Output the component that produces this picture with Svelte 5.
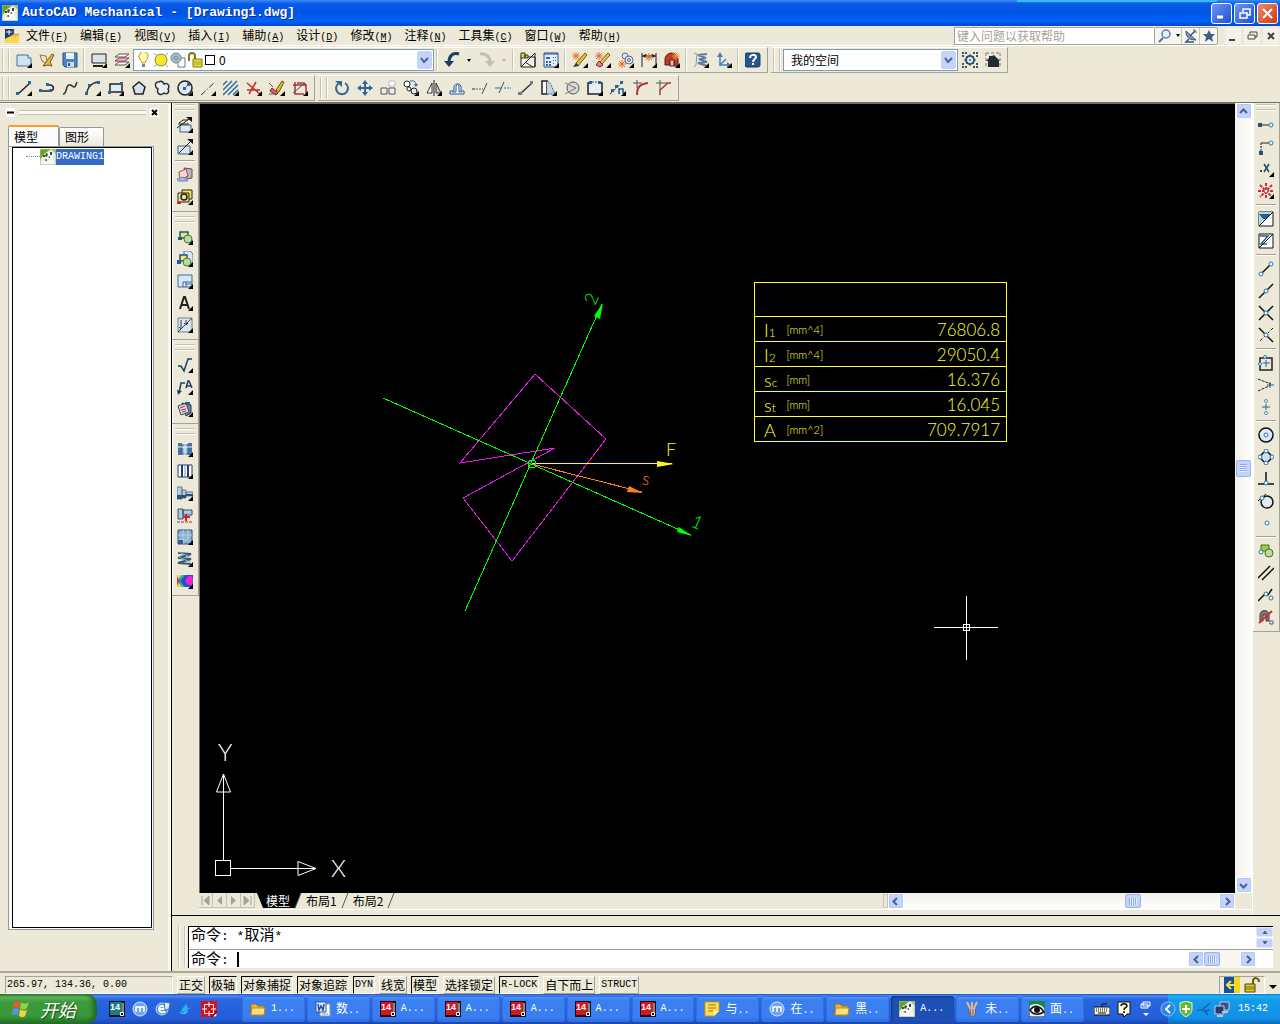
<script lang="ts">
    let layer = "0";
    let workspace = "我的空间";
    let question = "";
    let command = "";
    let activeTab = "模型";

    const menus = [
        ["文件", "F"], ["编辑", "E"], ["视图", "V"], ["插入", "I"], ["辅助", "A"], ["设计", "D"],
        ["修改", "M"], ["注释", "N"], ["工具集", "C"], ["窗口", "W"], ["帮助", "H"]
    ];

    // 16x16 artwork, shared by all the toolbars
    const icons: Record<string, string> = {
        page: '<path d="M1 3h11l3 3v8H1z" fill="#cfe3f4" stroke="#4c6f93"/><path d="M12 3v3h3" fill="#fff" stroke="#4c6f93"/>',
        open: '<path d="M1 3l6 1 2 8-6-3z" fill="#f0e5bd" stroke="#8b7a4a"/><path d="M4 14l9-12 2 1-4 7 2 4-4-1z" fill="#e6b93d" stroke="#77570f"/>',
        save: '<path d="M1 1h14v14H3l-2-2z" fill="#4d82c4" stroke="#2b5487"/><path d="M4 1h8v6H4z" fill="#eaf2fa"/><path d="M5 10h7v5H5z" fill="#cddcec"/><path d="M6 11h2v3H6z" fill="#2b5487"/>',
        screen: '<path d="M1 2h14v9H1z" fill="#dbe3e6" stroke="#222"/><path d="M2 14h10" stroke="#222" stroke-width="2"/>',
        layers: '<path d="M5 2h10l-4 3H1z" fill="#fff" stroke="#555"/><path d="M5 6h10l-4 3H1z" fill="#f3c0c7" stroke="#a03048"/><path d="M5 10h10l-4 3H1z" fill="#fff" stroke="#555"/>',
        undo: '<path d="M15 2C9 0 5 4 5 10" fill="none" stroke="#1d3f66" stroke-width="3"/><path d="M0 9h10l-5 6z" fill="#1d3f66"/>',
        redo: '<path d="M1 2c6-1 10 3 10 8" fill="none" stroke="#c3c0b3" stroke-width="3"/><path d="M6 9h10l-5 6z" fill="#c3c0b3"/>',
        title: '<path d="M1 5h14v10H1zM1 15L15 1v14M5 10l8 5" fill="#f4f4f0" stroke="#222"/><path d="M1 1h4v5H1zM5 3h3v3H5z" fill="#e8d22c" stroke="#333"/>',
        calc: '<path d="M1 1h14v14H1z" fill="#e5eefa" stroke="#234f86"/><path d="M1 2h14" stroke="#234f86" stroke-width="1"/><path d="M3 5h4v2H3zM3 9h2v2H3zM6 9h2v2H6zM3 12h2v2H3zM6 12h2v2H6zM10 5h1v1h-1zM12 5h1v1h-1zM10 8h1v1h-1zM12 8h1v1h-1zM10 11h1v1h-1z" fill="#2e69ad"/>',
        power: '<path d="M6 14L15 3l-2-2L4 11z" fill="#e7bd37" stroke="#74570f"/><path d="M4 11l3 3-6 1z" fill="#333"/><path d="M0 4h8M4 0v8M1 1l6 6M7 1L1 7" stroke="#e46a18"/>',
        erasePower: '<path d="M7 12L15 3l-2-2L5 10z" fill="#efc44a" stroke="#74570f"/><path d="M4 9l4 4-3 2-4-2z" fill="#df8585" stroke="#882222"/><path d="M0 4h8M4 0v8M1 1l6 6M7 1L1 7" stroke="#e46a18"/>',
        copyPower: '<circle cx="7" cy="4" r="3" fill="#dbe8f3" stroke="#5a6d80"/><circle cx="11" cy="8" r="4" fill="#dbe8f3" stroke="#5a6d80"/><circle cx="11" cy="8" r="1.5" stroke="#5a6d80"/><path d="M0 12h8M4 8v8M1 9l6 6M7 9l-6 6" stroke="#e46a18"/>',
        dim: '<path d="M1 1v14M15 1v11M1 4h14" stroke="#222"/><path d="M1 4l4-2v4zM15 4l-4-2v4z" fill="#222"/><path d="M4 5h8M8 1v8M5 2l6 6M11 2L5 8" stroke="#e46a18"/>',
        magnet: '<path d="M1 13V8a6 6 0 0 1 13-1v7h-4V8H6v5z" fill="#c13b25" stroke="#5c1a12"/><path d="M6 9v5h4V9" fill="#d3c6bd" stroke="#5c1a12"/><path d="M8 4h8M12 0v8M9 1l6 6M15 1L9 7" stroke="#ef9b33"/>',
        spring: '<path d="M14 2L5 3l8 3-7 1 8 3-9 1 9 3" fill="none" stroke="#5d7f9f" stroke-width="2"/><path d="M1 1l3 1-1 11-2 2" fill="none" stroke="#8298aa"/>',
        axes: '<path d="M4 14V2M4 13h9M4 13l6-6" fill="none" stroke="#4a7fae" stroke-width="1.5"/><path d="M1 5l3-5 3 5M11 10l4 3-4 3" fill="#4a7fae"/>',
        help: '<rect x="0" y="1" width="15" height="14" rx="2" fill="#23578e" stroke="#173b63"/><path d="M5 6c0-4 6-4 6-1 0 2-3 2-3 5" fill="none" stroke="#fff" stroke-width="2"/><path d="M7 11h2v2H7z" fill="#fff"/>',
        gear: '<path d="M1 5V1h4M11 1h4v4M15 11v4h-4M5 15H1v-4" fill="none" stroke="#3a566c" stroke-width="2" stroke-dasharray="2 1"/><circle cx="8" cy="8" r="4" fill="#e9eef0" stroke="#34536a" stroke-width="2"/><path d="M8 2v3M8 11v3M2 8h3M11 8h3M4 4l2 2M12 4l-2 2M4 12l2-2M12 12l-2-2" stroke="#34536a"/><circle cx="8" cy="8" r="1" fill="#34536a"/>',
        home: '<path d="M1 1h14M1 1v14M15 1v14" stroke="#777" stroke-dasharray="3 2"/><path d="M1 9l3-3V4h3l2-1 6 6h-1v6H3V9z" fill="#222a33"/>',
        line: '<path d="M2 14L14 3" stroke="#222" stroke-width="1.5"/><path d="M0 12h3v3H0zM12 1h3v3h-3z" fill="#2b659f"/>',
        pline: '<path d="M2 11h9c5 0 4-6 0-6H8" fill="none" stroke="#222" stroke-width="1.5"/><path d="M0 9h3v3H0zM7 3h3v3H7zM10 9h3v3h-3z" fill="#2b659f"/>',
        spline: '<path d="M1 14c3 0 3-4 4-7 2-5 6 0 7 0 2 0 2-3 3-5" fill="none" stroke="#333" stroke-width="1.5"/>',
        arc: '<path d="M2 14C2 8 6 3 13 2" fill="none" stroke="#333" stroke-width="1.5"/><path d="M0 12h3v3H0zM3 4h3v3H3zM12 1h3v3h-3z" fill="#2b659f"/>',
        rect: '<path d="M2 4h12v8H2z" fill="#e1ebf4" stroke="#222" stroke-width="1.5"/><path d="M0 11h3v3H0zM12 2h3v3h-3z" fill="#2b659f"/>',
        poly: '<path d="M8 2l6 5-2 7H4L2 7z" fill="#d3e1ec" stroke="#222" stroke-width="1.5"/>',
        cloud: '<path d="M4 9C0 7 1 1 5 2c2-2 4 0 5 2 4-2 6 2 4 5 2 3-1 6-4 4-3 3-8 1-6-4z" fill="#e9eef3" stroke="#333" stroke-width="1.5"/>',
        circle: '<circle cx="8" cy="8" r="7" fill="#d9e8f4" stroke="#222" stroke-width="1.5"/><path d="M8 8l4-4" stroke="#2b659f"/><path d="M6 7h3v3H6zM10 3h3v3h-3z" fill="#2b659f"/>',
        center: '<path d="M1 15L15 2" stroke="#333" stroke-dasharray="6 2 1 2"/>',
        hatch: '<path d="M0 5l4-4M0 10l9-9M0 15L14 1M5 15L15 5M10 15l5-5" stroke="#2f6ca7" stroke-width="1.5"/>',
        break: '<path d="M1 3l13 11M3 14L10 2M1 10h13" stroke="#c92c2c" stroke-width="1.5"/>',
        erase: '<path d="M7 10l6-9 2 1-5 10z" fill="#e5bb32" stroke="#6b500f"/><path d="M3 8l6 5-2 2-6-4z" fill="#e46565" stroke="#811d1d"/><path d="M0 14h7M0 3l4 4" stroke="#555"/>',
        contour: '<path d="M3 2v12h9M1 5h13v8M5 3h6c2 0 3 2 3 5" fill="none" stroke="#a83440" stroke-width="1.5"/><path d="M1 13L13 3" stroke="#555"/>',
        rotate: '<path d="M5 3a6 6 0 1 0 6 0" fill="none" stroke="#3b6791" stroke-width="2"/><path d="M1 1h7v6z" fill="#3b6791"/>',
        move: '<path d="M8 0l3 4H9v3h3V5l4 3-4 3V9H9v3h2l-3 4-3-4h2V9H4v2L0 8l4-3v2h3V4H5z" fill="#2f659c"/>',
        array: '<path d="M1 8h6v6H1zM9 8h6v6H9z" fill="#e8edf1" stroke="#555"/><path d="M9 1h6v5H9z" fill="#fff" stroke="#bbb"/>',
        copy: '<circle cx="4" cy="4" r="3" fill="#fff" stroke="#222"/><circle cx="11" cy="11" r="3" fill="#dce8f2" stroke="#222"/><circle cx="6" cy="9" r="2" fill="#fff" stroke="#222"/><path d="M7 1c5-1 6 2 6 4" fill="none" stroke="#2b659f"/><path d="M11 4h4l-2 3z" fill="#2b659f"/>',
        mirror: '<path d="M6 3v10H1z" fill="#fff" stroke="#333"/><path d="M10 3v10h5z" fill="#b9cfe2" stroke="#333"/><path d="M8 0v16" stroke="#222"/>',
        offset: '<path d="M1 14v-3h4V6a4 4 0 0 1 7 0v5h3v3z" fill="#fff" stroke="#1f568e"/><path d="M3 12h4V6c1-2 3-2 3 0v6h3" fill="none" stroke="#1f568e"/>',
        extend: '<path d="M0 9h3" stroke="#222"/><path d="M4 9h7" stroke="#2f6ca7" stroke-dasharray="2 1"/><path d="M10 14l5-11" stroke="#456"/>',
        trim: '<path d="M0 8h7" stroke="#2f6ca7"/><path d="M9 8h7" stroke="#2f6ca7" stroke-dasharray="2 1"/><path d="M4 13L9 2" stroke="#456"/>',
        lengthen: '<path d="M2 14L14 3" stroke="#333" stroke-width="1.5"/><path d="M0 12h4v3H0zM12 1h3v3h-3z" fill="#68818a"/>',
        stretch: '<path d="M1 1h5v13H1z" fill="#fff" stroke="#222" stroke-width="1.5"/><path d="M6 1c4 1 5 7 8 13H6" fill="#c3d4e3" stroke="#2f5e8e" stroke-dasharray="2 1"/>',
        join: '<circle cx="9" cy="8" r="6" fill="#d9d9d9" stroke="#555"/><path d="M1 3l11 5-11 6" fill="none" stroke="#777"/>',
        chamfer: '<path d="M3 3h-2v11h14V3h-2" fill="#e8eef4" stroke="#222" stroke-width="1.5"/><path d="M2 1h3v3H2zM11 1h3v3h-3z" fill="#2b659f"/><path d="M5 2h6" stroke="#2b659f" stroke-dasharray="2 1"/>',
        divide: '<path d="M0 14L14 1" stroke="#333" stroke-dasharray="3 2"/><path d="M1 9h3v3H1zM5 5h3v3H5zM10 1h3v3h-3z" fill="#2b659f"/><path d="M9 14V9h4v4h2" fill="none" stroke="#1f568e" stroke-width="1.5"/>',
        fillet: '<path d="M4 15c0-7 2-11 11-12" fill="none" stroke="#b5323c" stroke-width="2"/><path d="M0 3h9M4 0v8" stroke="#555"/>',
        bevel: '<path d="M4 15V10l8-7h3" fill="none" stroke="#b5323c" stroke-width="1.5"/><path d="M0 3h12M4 0v10" stroke="#555"/>',
        viewport: '<path d="M3 8h11v7H3z" fill="#dce8f3" stroke="#3c5f7f"/><path d="M0 11L12 2M1 7h11M2 6l4-3h5" stroke="#222"/><path d="M9 0h6v5z" fill="#111"/>',
        scaleView: '<path d="M1 7h12v8H1z" fill="#dce8f3" stroke="#3c5f7f"/><path d="M2 14L14 2" stroke="#222"/><path d="M10 0h6v5z" fill="#111"/>',
        hide: '<path d="M7 1l8 1v9l-5 1z" fill="#b7b7b7" stroke="#555"/><path d="M2 5l7-3 2 7-8 4z" fill="#f4d6d3" stroke="#ad4a52"/><path d="M0 12l6-2 5 4H1z" fill="#a6b8e0" stroke="#7486b5"/>',
        search: '<path d="M5 1h10v9H5z" fill="#f5e758" stroke="#222"/><path d="M1 4h11v9H1z" fill="#eee48b" stroke="#222"/><circle cx="7" cy="8" r="3" fill="none" stroke="#222" stroke-width="1.5"/><path d="M0 14h4" stroke="#c22" stroke-width="2"/>',
        block: '<path d="M3 3h8v6H3z" fill="#f2e85d" stroke="#20508a" stroke-width="1.5"/><circle cx="11" cy="10" r="4" fill="#b8da9e" stroke="#4a7a3a"/><path d="M1 8h4v3H1z" fill="#1f55a5"/>',
        blockPage: '<path d="M7 0h6l3 3v9H7z" fill="#d8e8f5" stroke="#4f79a3"/><path d="M3 4h7v6H3z" fill="#f2e85d" stroke="#20508a" stroke-width="1.5"/><circle cx="10" cy="11" r="4" fill="#b8da9e" stroke="#4a7a3a"/><path d="M0 9h4v4H0z" fill="#1f55a5"/>',
        frame: '<path d="M1 2h14v12H1z" fill="#d7e6f4" stroke="#3d6a99"/><path d="M6 14V9h9M9 9v5M9 11h6" fill="none" stroke="#3d6a99"/>',
        letter: '<path d="M3 14L7 2h1l4 12M4 10h7" fill="none" stroke="#222" stroke-width="2"/>',
        tableEdit: '<path d="M1 1h14v14H1z" fill="#dfe6ea" stroke="#6d8090"/><path d="M4 3v9M2 10l2 2 2-2M9 3v5M7 6l2 2 2-2M1 15L15 1" fill="none" stroke="#28405a"/>',
        surface: '<path d="M1 9h3l3 5 4-12h4" fill="none" stroke="#1d4066" stroke-width="1.5"/>',
        leader: '<path d="M2 14L4 4h4" fill="none" stroke="#1d4066" stroke-width="1.5"/><path d="M0 11l5 1-4 4z" fill="#1d4066"/><path d="M9 9l2-7h1l3 7M9 7h5" fill="none" stroke="#1d4066" stroke-width="1.5"/>',
        bom: '<path d="M5 2l9 2v8l-5 3z" fill="#6486a8" stroke="#334"/><path d="M1 5l8-3 3 9-8 3z" fill="#d6dde5" stroke="#445"/><path d="M3 7l5-2M4 9l5-1M5 11l4-1" stroke="#b5323c"/><path d="M8 1h5v3H8z" fill="#315f8d"/>',
        screw: '<path d="M1 2h4v12H1zM11 2h4v12h-4z" fill="#4474a6"/><path d="M5 4h6v9H5z" fill="#a8c5df" stroke="#335b83"/><path d="M8 1v14M1 6h14" stroke="#e7eff7"/>',
        hole: '<path d="M1 2h14v12H1z" fill="#fff" stroke="#1f3f66"/><path d="M5 2v12M11 2v12" stroke="#1f3f66" stroke-width="2"/><path d="M8 1v14" stroke="#7593b5"/>',
        shaft: '<path d="M0 2h5v12H0zM5 5h4v8H5zM9 7h7v4H9z" fill="#b7cbdc" stroke="#567a9c"/><path d="M0 10h5v4H0zM5 10h4v3H5zM9 9h7v2H9z" fill="#2d5072"/>',
        bearing: '<path d="M1 2h5v10H1zM6 3h9v5H6z" fill="#b4c8da" stroke="#2d5072"/><path d="M6 10h7M9 7v7" stroke="#d71f28" stroke-width="2"/><path d="M0 15h15" stroke="#d71f28" stroke-dasharray="3 1"/>',
        fea: '<path d="M1 1h14v14H1z" fill="#8bb1d3" stroke="#2d5072"/><path d="M1 6h14M1 11h10M6 1v14M11 1v10" stroke="#b9d0e6"/><path d="M1 11h5v4H1z" fill="#315f8d"/>',
        coil: '<path d="M1 2l13 1L1 7l13 1L1 12l13 1" fill="none" stroke="#35597b" stroke-width="2"/><path d="M2 1l11 5M2 6l11 5" stroke="#90abc2"/>',
        stress: '<path d="M0 2h16v12H0z" fill="#29a8e0"/><path d="M0 2h5L1 6zM0 14h5L1 9z" fill="#f2dc28"/><path d="M0 4v8l3-4z" fill="#e52d2d"/><path d="M3 8l5-6h8v12H8z" fill="#2454b8"/><path d="M8 8l3-5h4l1 5-1 4h-4z" fill="#f321d4"/>',
        track: '<path d="M4 8h7" stroke="#222"/><path d="M0 6h4v4H0z" fill="#28536f"/><circle cx="13" cy="8" r="2" fill="#fff" stroke="#2874ad"/>',
        from: '<path d="M11 4H3" stroke="#222"/><path d="M3 4v9" stroke="#222" stroke-dasharray="2 1"/><path d="M1 12h4v4H1z" fill="#28536f"/><circle cx="13" cy="4" r="2" fill="#fff" stroke="#2874ad"/>',
        dotx: '<path d="M6 3l5 8M11 3l-5 8" stroke="#2b4761" stroke-width="1.5"/><path d="M2 9h2v2H2z" fill="#2b4761"/>',
        burst: '<path d="M8 0v16M0 8h16M2 2l12 12M14 2L2 14" stroke="#c4303a" stroke-width="2" stroke-dasharray="3 1"/><circle cx="8" cy="8" r="2" fill="#fff" stroke="#c4303a"/>',
        filter: '<path d="M1 1h14v14H1z" fill="#fff" stroke="#111"/><path d="M1 1h14L1 15z" fill="#b5d7eb"/><path d="M1 3h12L8 8H5z" fill="#255e90"/><path d="M1 15L15 1" stroke="#111"/>',
        zoff: '<path d="M1 1h14v14H1z" fill="#fff" stroke="#111"/><path d="M2 3h8L3 11h6" fill="none" stroke="#315a89" stroke-width="1.5"/><path d="M1 15L15 1" stroke="#111"/>',
        endpoint: '<path d="M4 12l8-8" stroke="#111" stroke-width="1.5"/><circle cx="3" cy="13" r="2" fill="#fff" stroke="#2874ad"/><circle cx="13" cy="3" r="2" fill="#fff" stroke="#2874ad"/>',
        midpoint: '<path d="M1 15L15 1" stroke="#111" stroke-width="1.5"/><circle cx="8" cy="8" r="2" fill="#fff" stroke="#2874ad"/>',
        intersect: '<path d="M1 1l14 14M15 1L1 15" stroke="#111" stroke-width="1.5"/><circle cx="8" cy="8" r="2" fill="#fff" stroke="#2874ad"/>',
        apparent: '<path d="M1 1l14 14" stroke="#111" stroke-width="1.5"/><path d="M15 1L1 15" stroke="#111" stroke-dasharray="3 2"/><circle cx="8" cy="8" r="2" fill="#fff" stroke="#2874ad"/>',
        insert: '<path d="M2 3h12v12H2z" fill="none" stroke="#222" stroke-width="1.5"/><path d="M8 5v7M5 8h7" stroke="#2b6393"/><circle cx="7" cy="2" r="1.5" fill="#fff" stroke="#2874ad"/><circle cx="2" cy="9" r="1.5" fill="#fff" stroke="#2874ad"/>',
        sym: '<path d="M0 2l13 5M0 14l13-6" stroke="#222" stroke-dasharray="3 1"/><path d="M9 8h7M12 5v6" stroke="#2b6393"/>',
        between: '<path d="M4 8h8M8 5v6" stroke="#2b6393"/><circle cx="8" cy="2" r="1.5" fill="#fff" stroke="#6a879d"/><circle cx="8" cy="14" r="1.5" fill="#fff" stroke="#6a879d"/>',
        centerSnap: '<circle cx="8" cy="8" r="7" fill="#dceafa" stroke="#111" stroke-width="1.5"/><circle cx="8" cy="8" r="2" fill="#fff" stroke="#2874ad"/>',
        quadrant: '<circle cx="8" cy="8" r="5" fill="#cfdfef" stroke="#111" stroke-width="1.5"/><g fill="#fff" stroke="#2874ad"><circle cx="8" cy="2" r="2"/><circle cx="8" cy="14" r="2"/><circle cx="2" cy="8" r="2"/><circle cx="14" cy="8" r="2"/></g>',
        perp: '<path d="M8 1v11M0 13h16" stroke="#111" stroke-width="1.5"/><circle cx="8" cy="12" r="2" fill="#fff" stroke="#2874ad"/>',
        tangent: '<circle cx="9" cy="9" r="6" fill="#dfeaf2" stroke="#111" stroke-width="1.5"/><path d="M0 8l8-7" stroke="#111"/><circle cx="4" cy="5" r="2" fill="#fff" stroke="#2874ad"/>',
        node: '<circle cx="9" cy="8" r="2" fill="#fff" stroke="#2874ad"/>',
        insSnap: '<path d="M3 2h8v6H3z" fill="#9fce3e" stroke="#44721d"/><circle cx="11" cy="10" r="4" fill="#bedb9f" stroke="#44721d"/><circle cx="3" cy="9" r="2" fill="#fff" stroke="#2874ad"/>',
        parallel: '<path d="M0 13L12 1M4 15L16 3" stroke="#111" stroke-width="1.5"/>',
        nearest: '<path d="M0 14l6-6h4l4-6" fill="none" stroke="#111" stroke-width="1.5"/><circle cx="8" cy="7" r="2" fill="#fff" stroke="#2874ad"/><circle cx="13" cy="11" r="2" fill="#fff" stroke="#567"/>',
        snapOff: '<path d="M2 12V6c0-6 9-6 9 0v6H8V6H5v6z" fill="#777" stroke="#444"/><path d="M1 14L14 2" stroke="#d52a2a" stroke-width="2"/><path d="M12 12h3v3h-3z" fill="#fff" stroke="#555"/>',
        cad: '<path d="M0 0h16v16H0z" fill="#e4ecd9"/><path d="M0 0h11L4 5 0 11z" fill="#6aa31d"/><path d="M11 0h5v5z" fill="#9bc15e"/><path d="M2 15l2-7 5-5 5 2-2 5 3 4-6 2z" fill="#f8f8f3"/><path d="M3 6h2v2H3zM6 4l2 1-1 3-2-1zM10 3h2v3h-2zM8 8l2-1v2zM4 11l3-1v2z" fill="#3b4c35"/><path d="M0 0h16v16H0z" fill="none" stroke="#a8bb9b"/>',
        dwg: '<path d="M1 1h9l5 5v9H1z" fill="#f4c430"/><path d="M1 1h9v5L1 11z" fill="#17396d"/><path d="M10 1v5h5" fill="#fff" stroke="#99a"/><path d="M2 11c4-4 7 1 13-3v7H1z" fill="#ffd54a"/><path d="M5 2v5M2 4h6" stroke="#fff"/>',
        bulb: '<path d="M6 11C5 8 3 7 3 4a4 4 0 0 1 9 0c0 3-2 4-3 7z" fill="#fff9b8" stroke="#b39b25"/><path d="M6 12h3v3H6z" fill="#788"/>',
        sun: '<circle cx="8" cy="8" r="6" fill="#f2e92e" stroke="#91842c"/><path d="M1 1l3 3M15 1l-3 3M1 15l3-3M15 15l-3-3" stroke="#999"/>',
        freeze: '<path d="M8 6h7v9H8z" fill="#fff" stroke="#777"/><circle cx="6" cy="6" r="5" fill="#a9c5cc" stroke="#66858e"/><circle cx="6" cy="6" r="2" fill="none" stroke="#66858e"/>',
        lock: '<path d="M2 9V4c0-4 6-4 6 0v3" fill="none" stroke="#807a14" stroke-width="2"/><path d="M6 7h9v8H6z" fill="#e7df37" stroke="#807a14"/><path d="M6 10h9M6 12h9" stroke="#aaa31f"/>',
        glass: '<path d="M6 10l-4 4" stroke="#58708e" stroke-width="2"/><circle cx="9" cy="6" r="4" fill="#e6effc" stroke="#617ca2" stroke-width="1.5"/>',
        dish: '<path d="M3 3c0 7 4 9 10 9z" fill="#829bbb" stroke="#34557e"/><path d="M7 8l5-5M6 11l-3 3h8" fill="none" stroke="#34557e" stroke-width="1.5"/><path d="M10 2c3 0 3 1 3 3" fill="none" stroke="#34557e"/>',
        star: '<path d="M8 2l2 4h4l-3 3 1 5-4-3-4 3 1-5-3-3h4z" fill="#3f5e85"/>',
        folder: '<path d="M1 3h5l2 2h6v9H1z" fill="#e6b72e" stroke="#99701a"/><path d="M1 14l1-7h13l-1 7z" fill="#ffe27b" stroke="#b58a23"/>',
        word: '<path d="M5 3h10v12H5z" fill="#fff" stroke="#7796c7"/><path d="M1 1h10v10H1z" fill="#dbe8fb" stroke="#2f5ba8"/><path d="M3 3l1 6 2-4 2 4 1-6" fill="none" stroke="#234c97" stroke-width="1.5"/><path d="M7 13h6" stroke="#7796c7"/>',
        note: '<path d="M1 1h14v9l-5 5H1z" fill="#ffdd55" stroke="#c69b1e"/><path d="M4 4h8M4 7h8M4 10h5" stroke="#9b7614"/><path d="M10 15v-5h5" fill="#fff0a6"/>',
        maxthon: '<circle cx="8" cy="8" r="7" fill="#70a4e6" stroke="#d6e6fa"/><path d="M4 11V6h8v5M8 6v5" fill="none" stroke="#fff" stroke-width="1.5"/>',
        mail: '<circle cx="7" cy="8" r="6" fill="#4696d7" stroke="#c4e5f8"/><path d="M4 8h6c0-4-6-4-6 0s5 4 6 2" fill="none" stroke="#fff" stroke-width="2"/><path d="M9 1l6 1-1 6-4 1z" fill="#dceefa" stroke="#3875b5"/>',
        bird: '<path d="M3 10C4 7 7 5 9 2c-1 4 0 5 4 5-4 0-4 4-6 5z" fill="#21b9ef"/><path d="M2 11c4 3 6 1 8-1" fill="none" stroke="#83e6fc"/>',
        target: '<path d="M0 0h16v16H0z" fill="#e20b17"/><path d="M3.5 3.5h9v9h-9zM8 1v5M8 10v5M1 8h5M10 8h5" fill="none" stroke="#fff"/><path d="M16 11v5h-5z" fill="#fff" stroke="#111"/>',
        paint: '<path d="M4 7l8-1-1 9H6z" fill="#b8c5d0" stroke="#566"/><path d="M6 7L3 1M8 7V1M10 7l3-6" stroke="#e3b79a" stroke-width="2"/><path d="M6 8l1 6M9 8v6" stroke="#bd3939"/>',
        eye: '<path d="M0 0h16v16H0z" fill="#eee" stroke="#111"/><path d="M0 0h16v8C11 2 5 2 0 5z" fill="#148a43"/><path d="M1 9c5-6 10-4 14 2-5 3-10 4-14-2z" fill="#fff" stroke="#111" stroke-width="1.5"/><circle cx="8" cy="9" r="3" fill="#111"/>',
        keyboard: '<path d="M0 6h16v8H0z" fill="#f5f3df" stroke="#111"/><path d="M2 8h12M2 10h12" stroke="#111" stroke-dasharray="1 1"/><path d="M4 12h8M8 6V3h5" fill="none" stroke="#111"/>',
        ask: '<path d="M2 1h12v12h-3l-3 3-1-3H2z" fill="#fffbe0" stroke="#111"/><path d="M5 5c0-3 6-3 6 0 0 2-3 1-3 4M8 10v2" fill="none" stroke="#111" stroke-width="1.5"/>',
        restore: '<path d="M5 1h7v4H5zM3 3h7v4H3z" fill="#2b67dd" stroke="#fff"/><path d="M5 12h6l-3 3z" fill="#fff"/>',
        shield: '<path d="M2 2l6-2 6 2v6c0 4-3 6-6 8-3-2-6-4-6-8z" fill="#69b936" stroke="#e4f5d4"/><path d="M8 4v8M4 8h8" stroke="#fff" stroke-width="2"/>',
        plug: '<path d="M1 9h5l8-7M7 8l5 6M9 10l5-1" fill="none" stroke="#1761a7" stroke-width="1.5"/>',
        net: '<path d="M6 1h9v8H6z" fill="#365290" stroke="#c4cbdc"/><path d="M1 5h9v8H1z" fill="#273c73" stroke="#c4cbdc"/><path d="M3 15h6M8 11h6" stroke="#bac4dc" stroke-width="2"/>',
        comm: '<path d="M0 0h10v16H0z" fill="#164fa5"/><path d="M10 0h6v16h-6z" fill="#f4d817"/><path d="M3 8h9M7 4L3 8l4 4" fill="none" stroke="#ffe22b" stroke-width="2"/>',
        unlock: '<path d="M9 8V4c0-4 6-4 6 1" fill="none" stroke="#655d05" stroke-width="2"/><path d="M1 7h10v8H1z" fill="#dccb24" stroke="#4d4705"/><path d="M1 10h10M1 12h10" stroke="#766f0d"/>'
    };

    // [icon, has flyout]; "|" is a divider
    type Tool = [string, number?];
    const fileTools: Tool[] = [["page", 1], ["open"], ["save"], ["|"], ["screen", 1], ["layers", 1]];
    const powerTools: Tool[] = [
        ["|"], ["title"], ["calc", 1], ["|"], ["power", 1], ["erasePower", 1], ["copyPower", 1], ["dim", 1],
        ["magnet", 1], ["|"], ["spring", 1], ["axes", 1], ["|"], ["help"]
    ];
    const drawTools: Tool[] = [
        ["line", 1], ["pline"], ["spline"], ["arc", 1], ["rect", 1], ["poly"], ["cloud"], ["circle", 1],
        ["center", 1], ["hatch", 1], ["break", 1], ["erase", 1], ["contour", 1]
    ];
    const modifyTools: Tool[] = [
        ["rotate"], ["move"], ["array"], ["copy", 1], ["mirror", 1], ["offset"], ["extend"], ["trim"],
        ["lengthen"], ["stretch", 1], ["join"], ["chamfer", 1], ["divide", 1], ["fillet"], ["bevel"]
    ];
    const sideTools: Tool[][] = [
        [["viewport", 1], ["scaleView", 1], ["|"], ["hide"], ["search", 1]],
        [["block", 1], ["blockPage", 1], ["frame", 1], ["letter", 1], ["tableEdit", 1]],
        [["surface", 1], ["leader", 1], ["bom", 1]],
        [["screw", 1], ["hole", 1], ["shaft", 1], ["bearing"], ["fea", 1], ["coil", 1], ["stress", 1]]
    ];
    const snapTools: Tool[] = [
        ["track"], ["from"], ["dotx", 1], ["burst", 1], ["|"], ["filter"], ["zoff"], ["|"],
        ["endpoint"], ["midpoint"], ["intersect"], ["apparent"], ["|"], ["insert"], ["sym"], ["between"], ["|"],
        ["centerSnap"], ["quadrant"], ["perp"], ["tangent"], ["node"], ["|"],
        ["insSnap"], ["parallel"], ["nearest"], ["snapOff"]
    ];

    const results = [
        ["I", "1", "[mm^4]", "76806.8"],
        ["I", "2", "[mm^4]", "29050.4"],
        ["s", "c", "[mm]", "16.376"],
        ["s", "t", "[mm]", "16.045"],
        ["A", "", "[mm^2]", "709.7917"]
    ];

    let modes = [
        { label: "正交", on: false },
        { label: "极轴", on: true },
        { label: "对象捕捉", on: true },
        { label: "对象追踪", on: true },
        { label: "DYN", on: true },
        { label: "线宽", on: false },
        { label: "模型", on: true },
        { label: "选择锁定", on: false },
        { label: "R-LOCK", on: true },
        { label: "自下而上", on: false },
        { label: "STRUCT", on: false }
    ];

    const tasks = [
        ["folder", "1", "..."], ["word", "数", ".."], ["14", "A", "..."], ["14", "A", "..."], ["14", "A", "..."],
        ["14", "A", "..."], ["14", "A", "..."], ["note", "与", ".."], ["maxthon", "在", ".."],
        ["folder", "黑", ".."], ["cad", "A", "..."], ["paint", "未", ".."], ["eye", "面", ".."]
    ];
    let activeTask = 10;

    const isLatin = (s: string) => /^[\x20-\x7e]+$/.test(s);
</script>

{#snippet icon(name: string, fly = 0)}
    <svg class="icon" width="16" height="16" viewBox="0 0 16 16" fill="none" aria-hidden="true">
        {@html icons[name]}
        {#if fly}<path d="M16 11v5h-5z" fill="#000" />{/if}
    </svg>
{/snippet}

{#snippet fourteen(bg: string)}
    <svg class="icon" width="16" height="16" viewBox="0 0 16 16" aria-hidden="true">
        <rect width="16" height="16" fill="#111" />
        <rect x="1" y="1" width="12" height="13" fill={bg} />
        <path d="M14 2v10" stroke="#fff" />
        <text x="1" y="9" font-family="Liberation Sans" font-size="9" font-weight="bold" fill="#fff">14</text>
        <path d="M11.5 11.5h3v3h-3z" fill="#111" stroke="#fff" />
    </svg>
{/snippet}

{#snippet tools(list: Tool[])}
    {#each list as [name, fly]}
        {#if name === "|"}
            <span class="divider"></span>
        {:else}
            <button class="tool" aria-label={name}>{@render icon(name, fly)}</button>
        {/if}
    {/each}
{/snippet}

{#snippet scrollButton(dir: string, d: string)}
    <button class="scroll-btn" aria-label={dir}>
        <svg width="9" height="9" viewBox="0 0 9 9"><path {d} fill="none" stroke="#4d6185" stroke-width="2" /></svg>
    </button>
{/snippet}

<div class="window">
    <header class="titlebar">
        {@render icon("cad")}
        <h1>AutoCAD Mechanical - [Drawing1.dwg]</h1>
        <span class="peek"></span>
        <div class="caption">
            <button aria-label="minimize"><svg width="17" height="17"><path d="M4 12h6" stroke="#fff" stroke-width="3" /></svg></button>
            <button aria-label="restore"><svg width="17" height="17"><path d="M7 7V4h7v6h-3M4 8h7v5H4z" fill="none" stroke="#fff" stroke-width="1.5" /></svg></button>
            <button class="close" aria-label="close"><svg width="17" height="17"><path d="M4 4l9 9M13 4l-9 9" stroke="#fff" stroke-width="2" /></svg></button>
        </div>
    </header>

    <nav class="menubar">
        {@render icon("dwg")}
        <div class="menus">
            {#each menus as [label, key]}
                <button>{label}<span class="latin">(<u>{key}</u>)</span></button>
            {/each}
        </div>
        <input class="ask" bind:value={question} placeholder="键入问题以获取帮助" aria-label="键入问题以获取帮助" />
        <div class="info">
            <button class="find" aria-label="search">{@render icon("glass")}<i class="caret"></i></button>
            <button aria-label="communication">{@render icon("dish")}</button>
            <button aria-label="favorites">{@render icon("star")}</button>
        </div>
        <div class="doc-buttons">
            <button aria-label="minimize drawing"><svg width="12" height="12"><path d="M2 10h6" stroke="#444" stroke-width="2" /></svg></button>
            <button aria-label="restore drawing"><svg width="12" height="12"><path d="M4 4V2h7v5H9M2 5h7v4H2z" fill="none" stroke="#444" /></svg></button>
            <button aria-label="close drawing"><svg width="12" height="12"><path d="M3 3l6 6M9 3L3 9" stroke="#444" stroke-width="2" /></svg></button>
        </div>
    </nav>

    <div class="bar-row">
        <div class="bar">
            <span class="grip"></span>
            {@render tools(fileTools)}
            <div class="combo layer">
                <select bind:value={layer} aria-label="layer">
                    <option>0</option>
                </select>
                <span class="layer-state">
                    {@render icon("bulb")}{@render icon("sun")}{@render icon("freeze")}{@render icon("lock")}<i class="swatch"></i>
                </span>
                <span class="drop"><svg width="9" height="9"><path d="M1 2l3 4 4-4" fill="none" stroke="#4d6185" stroke-width="2" /></svg></span>
            </div>
            <span class="divider"></span>
            <button class="tool" aria-label="undo">{@render icon("undo")}</button>
            <button class="more" aria-label="undo list"><i class="caret"></i></button>
            <button class="tool" aria-label="redo">{@render icon("redo")}</button>
            <button class="more" aria-label="redo list"><i class="caret off"></i></button>
            {@render tools(powerTools)}
        </div>
        <div class="bar">
            <span class="grip"></span>
            <div class="combo space">
                <select bind:value={workspace} aria-label="workspace">
                    <option>我的空间</option>
                </select>
                <span class="drop"><svg width="9" height="9"><path d="M1 2l3 4 4-4" fill="none" stroke="#4d6185" stroke-width="2" /></svg></span>
            </div>
            {@render tools([["gear"], ["home"]])}
        </div>
    </div>

    <div class="bar-row">
        <div class="bar">
            <span class="grip"></span>
            {@render tools(drawTools)}
        </div>
        <div class="bar">
            <span class="grip"></span>
            {@render tools(modifyTools)}
        </div>
    </div>

    <main class="work">
        <aside class="browser">
            <div class="browser-head">
                <button aria-label="collapse"><svg width="9" height="9"><path d="M1 4.5h7" stroke="#000" stroke-width="2" /></svg></button>
                <span class="lines"></span>
                <button aria-label="close browser"><svg width="9" height="9"><path d="M2 2l5 5M7 2L2 7" stroke="#000" stroke-width="2" /></svg></button>
            </div>
            <div class="browser-tabs">
                <button class="current">模型</button>
                <button>图形</button>
            </div>
            <div class="tree-frame">
                <div class="tree">
                    <span class="branch"></span>
                    {@render icon("cad")}
                    <span class="leaf">DRAWING1</span>
                </div>
            </div>
        </aside>

        <div class="right">
            <div class="doc">
                <div class="rail">
                    {#each sideTools as group}
                        <div class="vbar">
                            <span class="vgrip"></span>
                            {@render tools(group)}
                        </div>
                    {/each}
                </div>

                <div class="view">
                    <div class="view-main">
                        <div class="canvas">
                            <svg class="drawing" viewBox="200 104 1035 789" preserveAspectRatio="xMinYMin meet" fill="none">
                                <g shape-rendering="crispEdges">
                                    <path d="M460 463L535 374L606 439L512 561L463 498L555 448Z" stroke="#e81ee8" />
                                    <path d="M383 398L691 535M465 611L602 304" stroke="#00ff00" />
                                    <path d="M532 463.5H672" stroke="#ffff00" />
                                    <path d="M532 464L642 492" stroke="#ff7f1f" />
                                    <circle cx="532" cy="464" r="4" stroke="#00ff00" />
                                </g>
                                <path d="M692 536L677 532L679 527ZM603 303L600 319L594 316Z" fill="#00ff00" />
                                <path d="M674 464L657 461V467Z" fill="#ffff00" />
                                <path d="M643 493L627 492L629 486Z" fill="#ff7f1f" />
                                <g class="cad-text">
                                    <text x="666" y="456" fill="#ffff00">F</text>
                                    <text transform="translate(641 484) rotate(14)" fill="#ff7f1f">s</text>
                                    <text transform="translate(690 526) rotate(24)" fill="#00ff00">1</text>
                                    <text transform="translate(595 306) rotate(-66)" fill="#00ff00">2</text>
                                </g>
                                <g stroke="#fff" shape-rendering="crispEdges">
                                    <path d="M215.5 860.5h15v15h-15zM223.5 860V774M231 868.5h85" />
                                    <path d="M934 627.5h64M966.5 596v64M963.5 624.5h6v6h-6z" />
                                </g>
                                <path d="M223.5 774l-7 18h14zM316 868.5l-18-7v14z" stroke="#fff" />
                                <g class="cad-text axis" fill="#fff">
                                    <text x="218" y="761">Y</text>
                                    <text x="331" y="877">X</text>
                                </g>
                            </svg>
                            <table class="results">
                                <thead>
                                    <tr><th colspan="3"></th></tr>
                                </thead>
                                <tbody>
                                    {#each results as [sym, sub, unit, value]}
                                        <tr>
                                            <td class="sym">{sym}<small>{sub}</small></td>
                                            <td class="unit">{unit}</td>
                                            <td class="value">{value}</td>
                                        </tr>
                                    {/each}
                                </tbody>
                            </table>
                        </div>
                        <div class="vscroll">
                            {@render scrollButton("up", "M1 6l3.5-3.5L8 6")}
                            <span class="gap" style:flex-grow={46}></span>
                            <span class="thumb"></span>
                            <span class="gap" style:flex-grow={54}></span>
                            {@render scrollButton("down", "M1 3l3.5 3.5L8 3")}
                        </div>
                    </div>
                    <div class="sheets">
                        <div class="sheet-nav">
                            <button aria-label="first"><svg width="9" height="9"><path d="M1 0v9M8 0v9L3 4.5z" fill="#a5a294" stroke="#a5a294" /></svg></button>
                            <button aria-label="previous"><svg width="9" height="9"><path d="M7 0v9L2 4.5z" fill="#a5a294" /></svg></button>
                            <button aria-label="next"><svg width="9" height="9"><path d="M2 0v9l5-4.5z" fill="#a5a294" /></svg></button>
                            <button aria-label="last"><svg width="9" height="9"><path d="M8 0v9M1 0v9l5-4.5z" fill="#a5a294" stroke="#a5a294" /></svg></button>
                        </div>
                        {#each ["模型", "布局1", "布局2"] as tab}
                            <button class="sheet" class:current={tab === activeTab} on:click={() => (activeTab = tab)}>{tab}</button>
                            <svg class="slant" width="11" height="15">
                                {#if tab === activeTab}<path d="M0 0h10L4 15H0z" fill="#000" />{/if}
                                <path d="M10 0L4 15" stroke="#555" />
                            </svg>
                        {/each}
                        <span class="fill"></span>
                        <div class="hscroll">
                            <span class="split"></span>
                            {@render scrollButton("left", "M6 1L2.5 4.5L6 8")}
                            <span class="gap" style:flex-grow={74}></span>
                            <span class="thumb side"></span>
                            <span class="gap" style:flex-grow={26}></span>
                            {@render scrollButton("right", "M3 1l3.5 3.5L3 8")}
                        </div>
                    </div>
                </div>

                <div class="rail snaps">
                    <div class="vbar">
                        <span class="vgrip"></span>
                        {@render tools(snapTools)}
                    </div>
                </div>
            </div>

            <div class="command">
                <span class="grip"></span>
                <div class="console">
                    <div class="history">
                        <span class="log">命令<span class="mono">: *</span>取消<span class="mono">*</span></span>
                        <div class="mini">
                            <button aria-label="history up"><svg width="6" height="4"><path d="M1 4l2-3 2 3" fill="#4d6185" stroke="#4d6185" /></svg></button>
                            <button aria-label="history down"><svg width="6" height="4"><path d="M1 0l2 3 2-3" fill="#4d6185" stroke="#4d6185" /></svg></button>
                        </div>
                    </div>
                    <div class="prompt">
                        <label for="cmd">命令<span class="mono">:</span></label>
                        <span class="cursor"></span>
                        <input id="cmd" bind:value={command} />
                        <div class="prompt-scroll">
                            {@render scrollButton("command left", "M6 1L2.5 4.5L6 8")}
                            <span class="thumb side"></span>
                            <span class="gap" style:flex-grow={1}></span>
                            {@render scrollButton("command right", "M3 1l3.5 3.5L3 8")}
                        </div>
                    </div>
                </div>
            </div>
        </div>
    </main>

    <footer class="status">
        <span class="coords latin">265.97, 134.36, 0.00</span>
        {#each modes as mode}
            <button class="mode" class:on={mode.on} class:latin={isLatin(mode.label)} on:click={() => (mode.on = !mode.on)}>{mode.label}</button>
        {/each}
        <span class="fill"></span>
        <span class="tray-box">{@render icon("comm")}{@render icon("unlock")}</span>
        <i class="caret big"></i>
    </footer>

    <div class="taskbar">
        <button class="start">
            <svg width="20" height="18" viewBox="0 0 20 18" aria-hidden="true">
                <path d="M3 3c2-2 4-2 6-1L8 8C6 7 4 7 2 8z" fill="#f2572b" />
                <path d="M10 2c3 2 5 2 8 0l-2 6c-2 2-5 2-7 0z" fill="#8fd13f" />
                <path d="M2 9c2-1 4-1 6 0l-1 6c-2-1-4-1-6 0z" fill="#5b92f0" />
                <path d="M9 9c2 2 5 2 7 1l-2 6c-2 2-4 1-6 0z" fill="#f7d03c" />
            </svg>
            <span>开始</span>
        </button>
        <div class="quick">
            <button aria-label="AutoCAD">{@render fourteen("#207b84")}</button>
            {#each ["maxthon", "mail", "bird", "target"] as q}
                <button aria-label={q}>{@render icon(q)}</button>
            {/each}
        </div>
        <div class="tasks">
            {#each tasks as [pic, text, dots], i}
                <button class="task" class:active={i === activeTask} on:click={() => (activeTask = i)}>
                    {#if pic === "14"}{@render fourteen("#d61420")}{:else}{@render icon(pic)}{/if}
                    <span class:latin={isLatin(text)}>{text}<span class="latin">{dots}</span></span>
                </button>
            {/each}
        </div>
        <div class="lang">
            {@render icon("keyboard")}{@render icon("ask")}{@render icon("restore")}
        </div>
        <div class="tray">
            <button class="chevron" aria-label="show icons"><svg width="16" height="16"><circle cx="8" cy="8" r="7" fill="#2c83e6" stroke="#8cc6f7" /><path d="M10 4L6 8l4 4" fill="none" stroke="#fff" stroke-width="2" /></svg></button>
            {@render icon("shield")}{@render icon("plug")}{@render icon("net")}
            <time>15:42</time>
        </div>
    </div>
</div>

<style>
    :global(body) {
        background: #ece9d8;
    }
    .window {
        display: flex;
        flex-direction: column;
        min-height: 100vh;
        background: #ece9d8;
        color: #000;
        font-family: "Noto Sans CJK SC", sans-serif;
        font-size: 12px;
        line-height: 16px;
    }
    .window * {
        box-sizing: border-box;
    }
    button, input, select {
        font: inherit;
        color: inherit;
        margin: 0;
        padding: 0;
        border: 0;
        background: none;
        border-radius: 0;
        white-space: nowrap;
    }
    svg {
        display: block;
        flex: none;
    }
    .latin {
        font-family: "Liberation Mono", monospace;
        font-size: 10px;
    }
    .fill {
        flex: 1;
    }

    .titlebar {
        display: flex;
        align-items: center;
        height: 26px;
        padding: 0 2px;
        gap: 4px;
        background: linear-gradient(#3a8cf5 0, #0a5ae8 4px, #0054e3 12px, #0062fb 21px, #0047c8 26px);
    }
    h1 {
        margin: 0;
        flex: 1;
        color: #fff;
        font: bold 13px/16px "Liberation Mono", monospace;
        text-shadow: 1px 1px #0a2f8a;
    }
    .peek {
        align-self: flex-start;
        width: 200px;
        height: 2px;
        background: #35b9f0;
    }
    .caption {
        display: flex;
        gap: 2px;
    }
    .peek + .caption {
        margin-left: -10px;
    }
    .caption button {
        width: 21px;
        height: 21px;
        padding: 1px;
        border: 1px solid #fff;
        border-radius: 3px;
        background: linear-gradient(135deg, #6c97f3, #1d4fd8);
    }
    .caption .close {
        background: linear-gradient(135deg, #f08a6c, #cf3a12);
    }

    .menubar {
        display: flex;
        align-items: center;
        height: 20px;
        padding: 0 1px 0 4px;
        border-bottom: 1px solid #fff;
    }
    .menus {
        display: flex;
        flex: 1;
    }
    .menus button {
        padding: 0 6px;
        height: 18px;
        line-height: 16px;
    }
    .ask {
        width: 200px;
        height: 18px;
        padding: 0 2px;
        background: #fff;
        border: 1px solid #a5a294;
        border-right: 0;
    }
    .ask::placeholder {
        color: #a5a294;
        opacity: 1;
    }
    .info {
        display: flex;
        height: 18px;
        border: 1px solid #a5a294;
        border-radius: 2px;
        background: #f6f5ee;
    }
    .info button {
        display: flex;
        align-items: center;
        width: 18px;
        border-left: 1px solid #c9c6b8;
        justify-content: center;
    }
    .info .find {
        width: 26px;
        gap: 3px;
        border: 0;
    }
    .doc-buttons {
        display: flex;
        gap: 3px;
        margin-left: 7px;
    }
    .doc-buttons button {
        width: 16px;
        height: 16px;
        padding: 2px;
        background: #f4f2e8;
    }
    .caret {
        width: 0;
        border: 2px solid transparent;
        border-top: 3px solid #000;
        border-bottom: 0;
    }
    .caret.off {
        border-top-color: #b9b6a8;
    }
    .caret.big {
        border-width: 4px 4px 0;
        margin-top: 4px;
    }

    .bar-row {
        display: flex;
        height: 28px;
        padding: 1px 0;
        gap: 3px;
    }
    .bar {
        display: flex;
        align-items: center;
        padding: 0 3px 0 2px;
        border-top: 1px solid #fff;
        border-right: 1px solid #a5a294;
        border-bottom: 1px solid #a5a294;
    }
    .grip {
        width: 7px;
        height: 22px;
        margin-right: 3px;
        border: solid #c5c2b2;
        border-width: 0 1px;
        box-shadow: inset 1px 0 #fff, 1px 0 #fff;
    }
    .tool {
        display: flex;
        align-items: center;
        justify-content: center;
        width: 23px;
        height: 22px;
    }
    .more {
        display: flex;
        align-items: center;
        justify-content: center;
        width: 12px;
        height: 22px;
    }
    .divider {
        width: 6px;
        height: 22px;
        background: linear-gradient(90deg, transparent 2px, #c5c2b2 2px, #c5c2b2 3px, #fff 3px, #fff 4px, transparent 4px);
    }
    .combo {
        position: relative;
        height: 22px;
    }
    .combo select {
        width: 100%;
        height: 100%;
        padding-left: 7px;
        appearance: none;
        background: #fff;
        border: 1px solid #7f9db9;
    }
    .layer {
        width: 301px;
    }
    .layer select {
        padding-left: 85px;
    }
    .space {
        width: 175px;
    }
    .layer-state {
        position: absolute;
        left: 3px;
        top: 3px;
        display: flex;
        align-items: center;
        gap: 1px;
        pointer-events: none;
    }
    .swatch {
        width: 10px;
        height: 10px;
        margin-left: 1px;
        border: 1px solid #000;
    }
    .drop {
        position: absolute;
        right: 2px;
        top: 2px;
        width: 15px;
        height: 18px;
        padding: 5px 3px;
        background: #c3d3fb;
        border-radius: 2px;
        pointer-events: none;
    }

    .work {
        display: flex;
        flex: 1;
        border-top: 1px solid #716f64;
    }
    .browser {
        display: flex;
        flex-direction: column;
        width: 171px;
        padding: 4px 0 41px;
        border-right: 3px solid #f8f7f0;
        border-top: 1px solid #fff;
    }
    .browser-head {
        display: flex;
        align-items: center;
        gap: 4px;
        height: 9px;
        padding: 0 9px 0 6px;
    }
    .browser-head button {
        width: 9px;
        height: 9px;
        background: #fff;
    }
    .lines {
        flex: 1;
        height: 5px;
        border: solid #c5c2b2;
        border-width: 1px 0;
        background: #fbfaf5;
    }
    .browser-tabs {
        display: flex;
        align-items: flex-end;
        margin: 8px 0 0 8px;
    }
    .browser-tabs button {
        width: 45px;
        height: 19px;
        padding: 0 5px;
        text-align: left;
        border: 1px solid #919b9c;
        border-bottom: 0;
        border-radius: 2px 2px 0 0;
        background: linear-gradient(#fff, #eceadf);
    }
    .browser-tabs .current {
        width: 51px;
        height: 21px;
        border-top: 2px solid #f3a02c;
        background: #fcfcfe;
    }
    .tree-frame {
        display: flex;
        flex: 1;
        width: 146px;
        margin-left: 8px;
        padding: 0 1px 1px 3px;
        border: 1px solid #919b9c;
        background: #fcfcfe;
    }
    .tree {
        display: flex;
        flex: 1;
        align-items: flex-start;
        padding: 1px 0 0 13px;
        border: 1px solid #000;
        background: #fff;
    }
    .branch {
        width: 14px;
        height: 8px;
        border-bottom: 1px dotted #808080;
    }
    .leaf {
        height: 16px;
        background: #316ac5;
        color: #fff;
        font: 10px/16px "Liberation Mono", monospace;
    }

    .right {
        display: flex;
        flex: 1;
        flex-direction: column;
        min-width: 0;
        border-left: 1px solid #000;
    }
    .doc {
        display: flex;
        flex: 1;
        border-bottom: 1px solid #000;
    }
    .rail {
        width: 27px;
    }
    .vbar {
        display: flex;
        flex-direction: column;
        align-items: center;
        padding: 4px 2px 3px;
        border-right: 1px solid #a5a294;
        border-bottom: 1px solid #a5a294;
        box-shadow: inset 1px 0 #fff;
    }
    .vbar:first-child {
        padding-top: 1px;
    }
    .vgrip {
        width: 20px;
        height: 6px;
        margin-bottom: 4px;
        border: solid #c5c2b2;
        border-width: 1px 0;
        box-shadow: inset 0 1px #fff, 0 1px #fff;
    }
    .vbar .divider {
        width: 20px;
        height: 6px;
        background: linear-gradient(transparent 2px, #a5a294 2px, #a5a294 3px, #fff 3px, #fff 4px, transparent 4px);
    }
    .view {
        display: flex;
        flex: 1;
        flex-direction: column;
        min-width: 0;
        padding-bottom: 5px;
        border-right: 1px solid #fff;
    }
    .view-main {
        display: flex;
        flex: 1;
    }
    .canvas {
        position: relative;
        flex: 1;
        background: #000;
        border: solid #716f64;
        border-width: 1px 0 0 1px;
        overflow: hidden;
    }
    .drawing {
        position: absolute;
        inset: 0;
        width: 100%;
        height: 100%;
    }
    .cad-text {
        font-family: Lato, sans-serif;
        font-weight: 300;
        font-size: 18px;
    }
    .axis {
        font-size: 24px;
    }
    .results {
        position: absolute;
        left: 554px;
        top: 178px;
        width: 253px;
        border-collapse: collapse;
        color: #ffff30;
        font-family: Lato, sans-serif;
        font-weight: 300;
    }
    .results th {
        height: 34px;
        padding: 0;
        border: 1px solid #ffff30;
    }
    .results tr {
        border: 1px solid #ffff30;
    }
    .results td {
        height: 25px;
        padding: 2px 0 0;
        line-height: 18px;
        vertical-align: middle;
    }
    .results .sym {
        width: 32px;
        padding-left: 9px;
        font-size: 18px;
    }
    .results small {
        font-size: 12px;
        line-height: 12px;
    }
    .results .unit {
        font-size: 11px;
    }
    .results .value {
        padding-right: 6px;
        font-size: 17px;
        text-align: right;
    }

    .vscroll {
        display: flex;
        flex-direction: column;
        align-items: center;
        width: 17px;
        background: linear-gradient(90deg, #f3f1ec, #fefefb);
    }
    .gap {
        flex: 1 1 0;
    }
    .scroll-btn {
        display: flex;
        flex: none;
        align-items: center;
        justify-content: center;
        width: 16px;
        height: 16px;
        background: #c3d3fb;
        border: 1px solid #fff;
        border-radius: 2px;
        box-shadow: inset 0 0 0 1px #b4c8f6;
    }
    .thumb {
        flex: none;
        width: 15px;
        height: 17px;
        border: 1px solid #9cb3ea;
        border-radius: 2px;
        background: repeating-linear-gradient(#8fa9e8 0 1px, #e6eefe 1px 2px) center / 7px 8px no-repeat #c3d3fb;
    }
    .thumb.side {
        width: 16px;
        height: 14px;
        background: repeating-linear-gradient(90deg, #8fa9e8 0 1px, #e6eefe 1px 2px) center / 8px 7px no-repeat #c3d3fb;
    }
    .sheets {
        display: flex;
        height: 17px;
        padding-right: 17px;
        border-bottom: 1px solid #fff;
    }
    .sheet-nav {
        display: flex;
        padding-right: 2px;
    }
    .sheet-nav button {
        display: flex;
        align-items: center;
        justify-content: center;
        width: 14px;
        height: 15px;
        border: 1px solid #c5c2b2;
        border-width: 0 1px 1px 0;
    }
    .sheet {
        height: 15px;
        padding: 0 1px 0 4px;
        line-height: 15px;
    }
    .sheet.current {
        padding: 0 1px 0 9px;
        background: #000;
        color: #fff;
        clip-path: polygon(0 0, 100% 0, 100% 100%, 6px 100%);
    }
    .hscroll {
        display: flex;
        align-items: center;
        width: 34%;
        background: linear-gradient(#f3f1ec, #fefefb);
    }
    .split {
        width: 5px;
        height: 14px;
        border: 1px solid #c5c2b2;
        background: #ece9d8;
    }

    .command {
        display: flex;
        height: 55px;
        padding: 10px 7px 3px 6px;
    }
    .command .grip {
        height: 41px;
    }
    .console {
        display: flex;
        flex: 1;
        flex-direction: column;
        min-width: 0;
        border-top: 1px solid #000;
        border-left: 1px solid #000;
        background: #fff;
    }
    .history {
        display: flex;
        justify-content: space-between;
        height: 23px;
        border-bottom: 1px solid #a5a294;
    }
    .log, .prompt label {
        padding-left: 2px;
        font-size: 15px;
        line-height: 14px;
    }
    .mono {
        font-family: "Liberation Mono", monospace;
        font-size: 13px;
    }
    .mini {
        display: flex;
        flex-direction: column;
        gap: 1px;
        width: 17px;
    }
    .mini button {
        display: flex;
        align-items: center;
        justify-content: center;
        height: 10px;
        background: #c3d3fb;
        border: 1px solid #dfe8fd;
        border-radius: 2px;
    }
    .prompt {
        display: flex;
        align-items: center;
        height: 18px;
    }
    .cursor {
        width: 2px;
        height: 15px;
        margin-left: 8px;
        background: #000;
    }
    .prompt input {
        flex: 1;
        height: 16px;
        outline: 0;
    }
    .prompt-scroll {
        display: flex;
        align-items: center;
        width: 68px;
        height: 18px;
        margin-right: 17px;
        background: #f8f7f2;
    }

    .status {
        display: flex;
        align-items: center;
        height: 23px;
        padding: 2px 3px 0 5px;
        gap: 4px;
        border-top: 2px solid #aca899;
    }
    .coords {
        width: 168px;
        height: 18px;
        padding: 0 1px;
        line-height: 16px;
        border: 1px solid #fff;
        border-top-color: #a5a294;
        border-left-color: #a5a294;
    }
    .mode {
        height: 18px;
        padding: 0 1px;
        line-height: 16px;
        border: 1px solid #fff;
        border-right-color: #a5a294;
        border-bottom-color: #a5a294;
    }
    .mode.on {
        border-color: #000 #fff #fff #000;
    }
    .tray-box {
        display: flex;
        gap: 4px;
        padding: 0 4px;
        border: 1px solid #fff;
        border-top-color: #a5a294;
        border-left-color: #a5a294;
    }

    .taskbar {
        display: flex;
        height: 30px;
        color: #fff;
        background: linear-gradient(#1f4fb5 0, #4b8df5 2px, #2a66e0 5px, #245edb 24px, #1a45ac 30px);
    }
    .start {
        display: flex;
        align-items: center;
        gap: 9px;
        width: 97px;
        padding-left: 11px;
        border-radius: 0 10px 10px 0;
        background: linear-gradient(#2d7c2d 0, #5eb65a 3px, #3c993c 8px, #39983a 22px, #246b26 30px);
        box-shadow: inset -4px 0 4px #236b25;
    }
    .start span {
        font-size: 18px;
        line-height: 24px;
        font-style: italic;
        text-shadow: 1px 1px 1px #1c4b1c;
    }
    .quick {
        display: flex;
        align-items: center;
        gap: 7px;
        width: 145px;
        padding-left: 12px;
    }
    .tasks {
        display: flex;
        flex: 1;
        padding: 2px 0;
    }
    .task {
        display: flex;
        flex: 1 1 0;
        align-items: center;
        gap: 5px;
        min-width: 0;
        margin-right: 2px;
        padding-left: 8px;
        border-radius: 3px;
        background: linear-gradient(#5b9bfb, #3b80f2 4px, #3a7df0 22px, #2c68da);
        box-shadow: inset 0 0 0 1px #3270e4;
    }
    .task.active {
        background: #1e4fb5;
        box-shadow: inset 1px 1px 2px #12357f;
    }
    .lang {
        display: flex;
        align-items: center;
        gap: 6px;
        width: 82px;
        padding-left: 8px;
    }
    .tray {
        display: flex;
        align-items: center;
        gap: 2px;
        width: 112px;
        background: linear-gradient(#0d6fc9 0, #1fb2f5 2px, #139beb 6px, #1290e8 24px, #0d69b8 30px);
    }
    .chevron {
        margin-left: -8px;
    }
    time {
        margin-left: 6px;
        font: 10px/16px "Liberation Mono", monospace;
    }
</style>
